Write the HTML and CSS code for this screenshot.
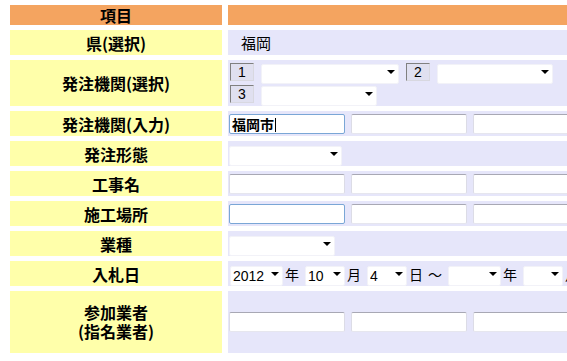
FILE: index.html
```html
<!DOCTYPE html>
<html lang="ja">
<head>
    <meta charset="UTF-8">
    <title>検索条件</title>
    <link rel="stylesheet" href="styles.css">
</head>
<body>
    <table class="search">
        <tr class="head">
            <th class="label">項目</th>
            <th class="value"></th>
        </tr>
        <tr>
            <td class="label">県(選択)</td>
            <td class="value"><span class="pref">福岡</span></td>
        </tr>
        <tr class="tall">
            <td class="label">発注機関(選択)</td>
            <td class="value">
                <div class="line">
                    <span class="num">1</span>
                    <span class="sel"><select class="w138"><option></option></select></span>
                    <span class="num">2</span>
                    <span class="sel"><select class="w116"><option></option></select></span>
                </div>
                <div class="line">
                    <span class="num">3</span>
                    <span class="sel"><select class="w116"><option></option></select></span>
                </div>
            </td>
        </tr>
        <tr>
            <td class="label">発注機関(入力)</td>
            <td class="value">
                <div class="line">
                    <span class="text focus filled">福岡市<span class="caret"></span></span>
                    <span class="text"></span>
                    <span class="text"></span>
                </div>
            </td>
        </tr>
        <tr>
            <td class="label">発注形態</td>
            <td class="value">
                <div class="line"><span class="sel"><select class="w113"><option></option></select></span></div>
            </td>
        </tr>
        <tr>
            <td class="label">工事名</td>
            <td class="value">
                <div class="line">
                    <span class="text"></span>
                    <span class="text"></span>
                    <span class="text"></span>
                </div>
            </td>
        </tr>
        <tr>
            <td class="label">施工場所</td>
            <td class="value">
                <div class="line">
                    <span class="text focus"></span>
                    <span class="text"></span>
                    <span class="text"></span>
                </div>
            </td>
        </tr>
        <tr>
            <td class="label">業種</td>
            <td class="value">
                <div class="line"><span class="sel"><select class="w106"><option></option></select></span></div>
            </td>
        </tr>
        <tr>
            <td class="label">入札日</td>
            <td class="value">
                <div class="line date">
                    <span class="sel"><select class="w53"><option>2012</option></select></span>
                    <span class="unit">年</span>
                    <span class="sel"><select class="w40"><option>10</option></select></span>
                    <span class="unit">月</span>
                    <span class="sel"><select class="w40"><option>4</option></select></span>
                    <span class="unit day">日</span>
                    <span class="unit tilde">～</span>
                    <span class="sel"><select class="w53"><option></option></select></span>
                    <span class="unit">年</span>
                    <span class="sel"><select class="w40"><option></option></select></span>
                    <span class="unit">月</span>
                </div>
            </td>
        </tr>
        <tr class="taller">
            <td class="label two">参加業者<br>(指名業者)</td>
            <td class="value">
                <div class="line">
                    <span class="text"></span>
                    <span class="text"></span>
                    <span class="text"></span>
                </div>
            </td>
        </tr>
    </table>
</body>
</html>
```

FILE: styles.css
```css
html {
    overflow: hidden;
}

body {
    margin: 0 0 0 4px;
    background: #fff;
    font-family: "Noto Sans CJK JP", sans-serif;
}

.search {
    border-collapse: separate;
    border-spacing: 6px 5px;
    table-layout: fixed;
    width: 620px;
}

.search td,
.search th {
    padding: 0;
    height: 25px;
    vertical-align: middle;
}

.label {
    width: 212px;
    background: #ffffaa;
    text-align: center;
    font-size: 16px;
    font-weight: bold;
    line-height: 18px;
    color: #000;
}

.label.two {
    line-height: 19px;
}

.value {
    background: #e6e6fa;
    padding-left: 1px !important;
    font-size: 15px;
}

.head th {
    height: 20px;
    background: #f4a460;
}

.tall td {
    height: 46px;
}

.taller td {
    height: 62px;
}

.pref {
    margin-left: 12px;
}

.line {
    display: flex;
    align-items: center;
    gap: 6px;
    white-space: nowrap;
    height: 20px;
}

.tall .line {
    margin: 1px 0 2px;
}

.tall .line .sel {
    margin-left: 1px;
}

.num {
    box-sizing: border-box;
    width: 24px;
    height: 18px;
    margin-left: 1px;
    padding-left: 7px;
    border: 1px solid;
    border-color: #808080 #d8d8e0 #d8d8e0 #808080;
    background: #e0e0f0;
    font-family: "Liberation Sans", sans-serif;
    font-size: 14px;
    line-height: 16px;
    color: #000;
}

.sel {
    position: relative;
    display: inline-block;
    height: 20px;
}

.sel::after {
    content: "";
    position: absolute;
    right: 4px;
    top: 8px;
    border-left: 4px solid transparent;
    border-right: 4px solid transparent;
    border-top: 4px solid #000;
    pointer-events: none;
}

select {
    -webkit-appearance: none;
    appearance: none;
    box-sizing: border-box;
    height: 20px;
    margin: 0;
    padding: 0 0 0 2px;
    border: 1px solid #f2f2f8;
    border-radius: 2px;
    background: #fff;
    font-family: "Liberation Sans", sans-serif;
    font-size: 14px;
    color: #000;
}

.w138 { width: 138px; }
.w116 { width: 116px; }
.w113 { width: 113px; }
.w106 { width: 106px; }
.w53 { width: 53px; }
.w40 { width: 40px; }

.text {
    box-sizing: border-box;
    display: inline-block;
    flex: none;
    width: 116px;
    height: 20px;
    border: 1px solid;
    border-color: #a8a8b4 #dcdce6 #e6e6ee #dcdce6;
    border-radius: 2px;
    background: #fff;
}

.text.focus {
    border-color: #7aa6d6;
}

.filled {
    padding-left: 2px;
    font-size: 14px;
    font-weight: bold;
    line-height: 18px;
    color: #000;
}

.caret {
    display: inline-block;
    width: 1px;
    height: 14px;
    margin-left: 1px;
    vertical-align: -2px;
    background: #000;
}

.date {
    gap: 0;
}

.date .sel:first-child {
    margin-left: 1px;
}

.unit {
    margin: 0 6px 0 2px;
    font-size: 14px;
    color: #000;
}

.unit.day {
    margin-right: 5px;
}

.tilde {
    margin: 0 6px 0 0;
}
```
